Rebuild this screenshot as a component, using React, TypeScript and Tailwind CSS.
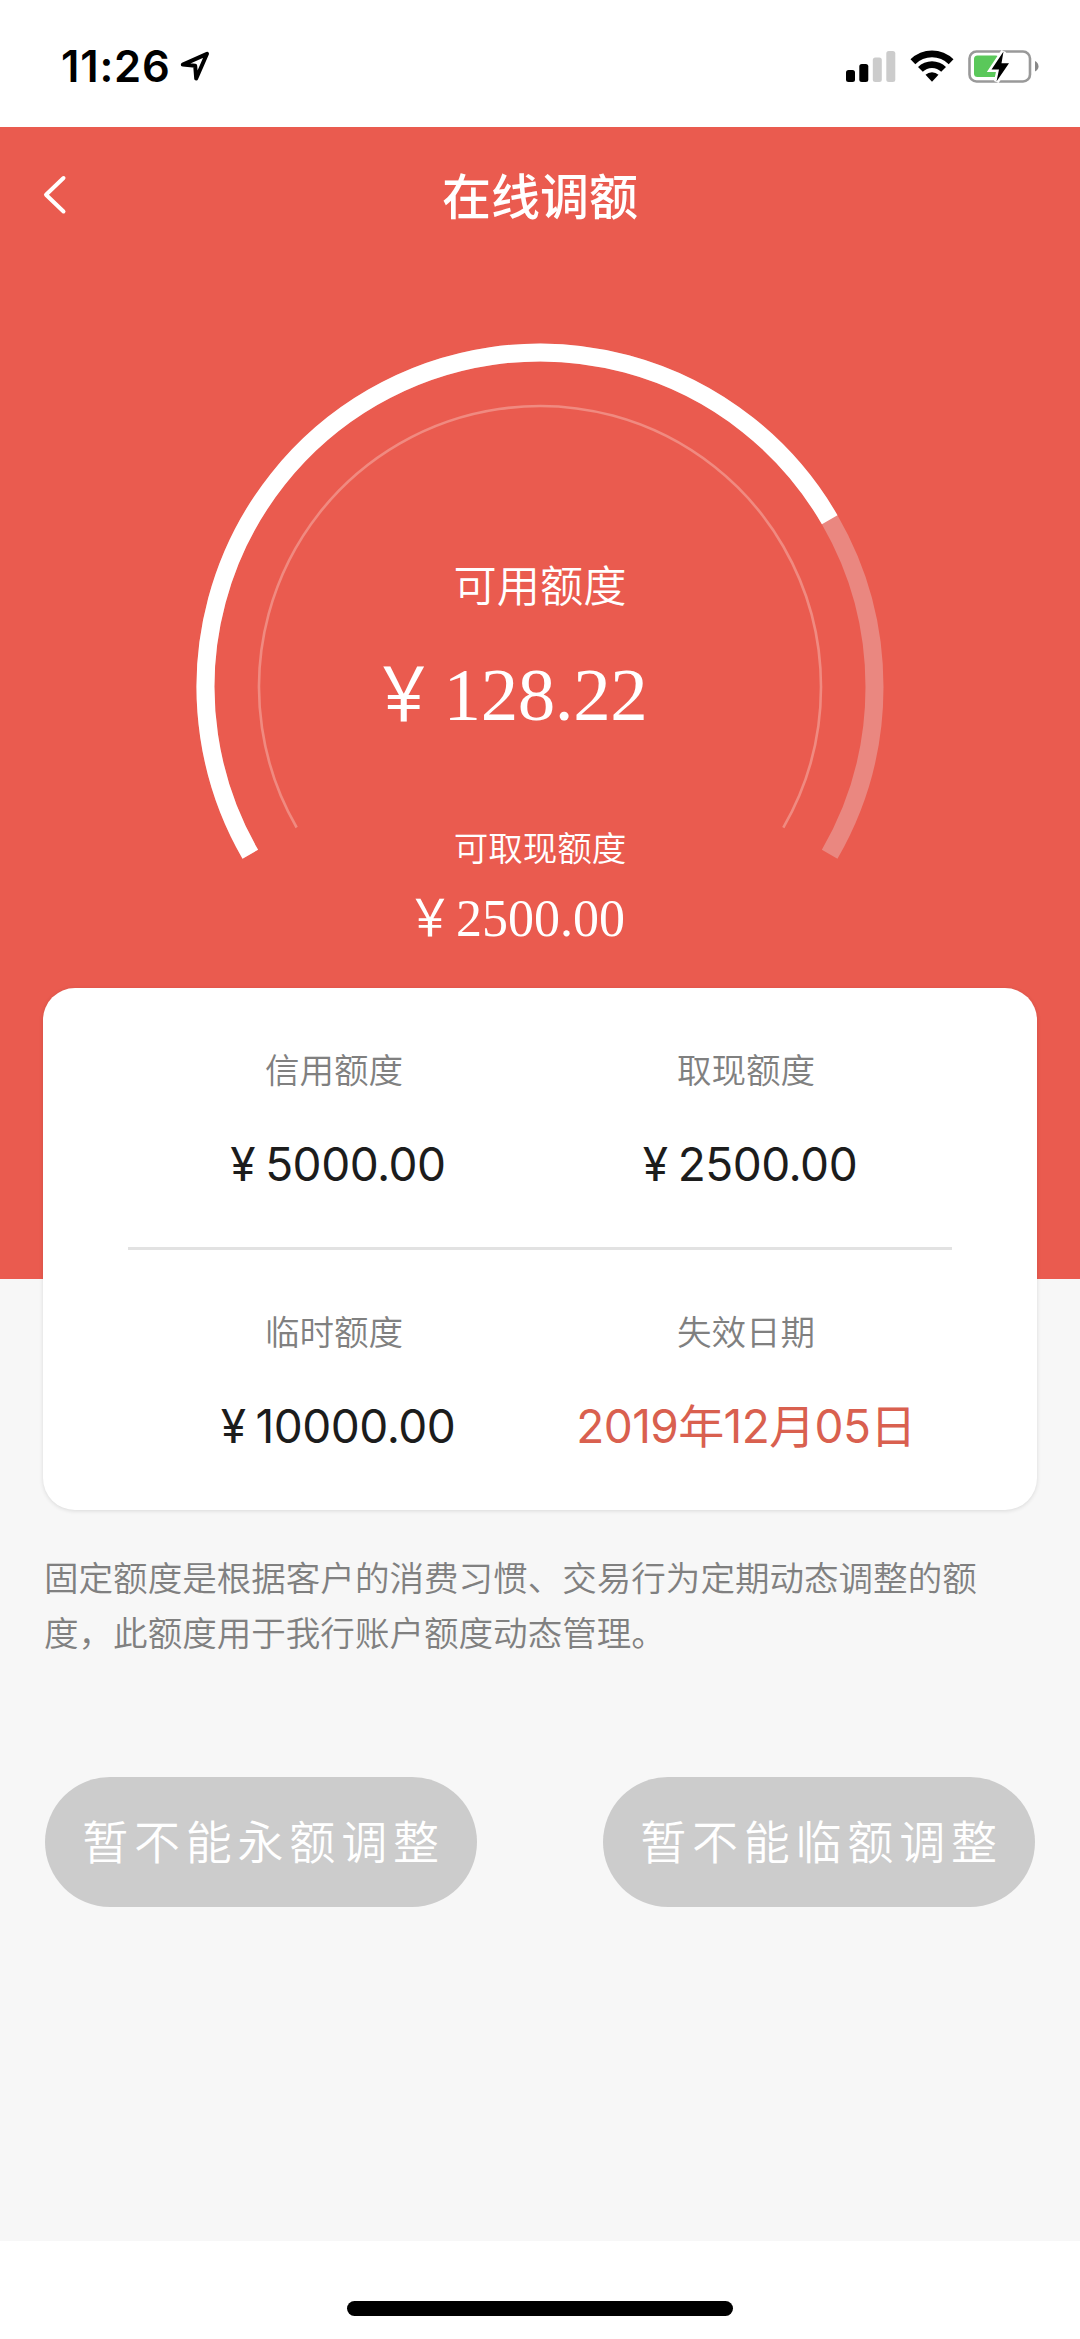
type Quota = {
  label: string;
  prefix?: string;
  value: string;
  highlight?: boolean;
};

const quotaRows: Quota[][] = [
  [
    { label: '信用额度', prefix: '¥', value: '5000.00' },
    { label: '取现额度', prefix: '¥', value: '2500.00' },
  ],
  [
    { label: '临时额度', prefix: '¥', value: '10000.00' },
    { label: '失效日期', value: '2019年12月05日', highlight: true },
  ],
];

const StatusBar = () => (
  <div className="flex h-[127px] shrink-0 items-start justify-between bg-white pl-[61px] pr-[41px] pt-[46px]">
    <div className="flex items-start gap-[9px]">
      <span className="h-10 text-[43.5px] font-semibold leading-10 tracking-[0.8px] text-black">11:26</span>
      <svg className="mt-[5px]" width="30" height="31" viewBox="0 0 30 31" fill="none">
        <path
          d="M2.8 13.6 L27 2.8 L16.2 27.5 L15.2 14.8 Z"
          stroke="#000"
          strokeWidth="4"
          strokeLinejoin="round"
        />
      </svg>
    </div>
    <div className="flex items-start gap-[14px] pt-1">
      <svg className="mt-px" width="50" height="31" viewBox="0 0 50 31">
        <rect x="0" y="19" width="9" height="12" rx="2.5" fill="#000" />
        <rect x="13.3" y="13" width="9" height="18" rx="2.5" fill="#000" />
        <rect x="26.8" y="6.5" width="9" height="24.5" rx="2.5" fill="#ccc" />
        <rect x="40.3" y="0" width="9" height="31" rx="2.5" fill="#ccc" />
      </svg>
      <svg width="44" height="32" viewBox="0 0 44 32">
        <path d="M0.5 9.3 A30.5 30.5 0 0 1 43.5 9.3 L38.7 14.2 A23.6 23.6 0 0 0 5.3 14.2 Z" fill="#000" />
        <path d="M8 17 A19.8 19.8 0 0 1 36 17 L31.2 21.8 A13 13 0 0 0 12.8 21.8 Z" fill="#000" />
        <path d="M15.5 24.8 A9.4 9.4 0 0 1 28.5 24.8 L22 31.8 Z" fill="#000" />
      </svg>
      <svg width="71" height="34" viewBox="0 0 71 34">
        <rect x="1.5" y="1.5" width="60.5" height="30" rx="7" fill="none" stroke="#999" strokeWidth="2.6" />
        <path d="M67 11 Q70.5 13 70.5 16.3 Q70.5 19.8 67 21.6 Z" fill="#888" />
        <rect x="6" y="5.5" width="25" height="21.5" rx="3.5" fill="#5ac85a" />
        <path
          d="M35.5 1.5 L23.5 19.5 H31 L28.5 31.5 L41 13.2 H33.5 Z"
          fill="#000"
          stroke="#fff"
          strokeWidth="5"
          paintOrder="stroke"
        />
      </svg>
    </div>
  </div>
);

const NavBar = () => (
  <header className="relative flex h-[138px] items-center justify-center pt-1">
    <svg className="absolute left-[42px] top-[47px]" width="26" height="42" viewBox="0 0 26 42" fill="none">
      <path d="M21.5 4 L4 20.7 L21.5 37.5" stroke="#fff" strokeWidth="4" strokeLinecap="round" strokeLinejoin="round" />
    </svg>
    <h1 className="text-[49px] font-medium leading-[70px] text-white">在线调额</h1>
  </header>
);

// Both rings open at the bottom: 240deg sweep starting at 150deg, 180deg of it filled
const QuotaGauge = () => (
  <div className="relative flex flex-col items-center text-white">
    <svg className="absolute left-1/2 top-[78px] -translate-x-1/2" width="688" height="688" viewBox="0 0 688 688" fill="none">
      <g transform="rotate(150 344 344)">
        <circle cx="344" cy="344" r="334.5" pathLength="360" strokeDasharray="240 120" stroke="#ea8780" strokeWidth="18" />
        <circle cx="344" cy="344" r="334.5" pathLength="360" strokeDasharray="180 180" stroke="#fff" strokeWidth="18" />
        <circle cx="344" cy="344" r="281" pathLength="360" strokeDasharray="240 120" stroke="#f08a80" strokeWidth="2.6" />
      </g>
    </svg>
    <p className="relative mt-[291px] text-[43.2px] font-[350] leading-[60px]">可用额度</p>
    <p className="relative mt-[34px] flex pr-[65px] font-['Liberation_Serif','Noto_Sans_CJK_SC',serif] text-[75px] leading-[90px] tracking-[-0.4px]">
      <span className="w-[76px] scale-y-[1.16] pr-1 text-center text-[65px]">￥</span>
      <span>128.22</span>
    </p>
    <p className="relative mt-[84px] text-[34.56px] font-[350] leading-[50px]">可取现额度</p>
    <p className="relative mt-[15px] flex pr-[51px] font-['Liberation_Serif','Noto_Sans_CJK_SC',serif] text-[52px] leading-[60px]">
      <span className="w-[52px] scale-y-[1.12] text-center text-[46px]">￥</span>
      <span>2500.00</span>
    </p>
  </div>
);

const QuotaCell = ({ label, prefix, value, highlight }: Quota) => (
  <div className="flex flex-1 flex-col items-center">
    <p className="text-[34.56px] font-[350] leading-[50px] text-[#808080]">{label}</p>
    <p
      className={`mt-[38px] flex whitespace-nowrap text-[46px] leading-[60px] ${
        highlight ? 'tracking-[-0.6px] text-[#d9604f]' : 'pl-2 tracking-[-0.5px] text-[#1c1c1c]'
      }`}
    >
      {prefix && <span className="mr-[10px]">{prefix}</span>}
      <span>{value}</span>
    </p>
  </div>
);

const App = () => {
  return (
    <div className="flex h-[2339px] w-[1080px] flex-col overflow-hidden bg-[#f7f7f7] font-['Inter','Noto_Sans_CJK_SC',sans-serif]">
      <StatusBar />

      <section className="h-[1152px] shrink-0 bg-[#ea5b4f]">
        <NavBar />
        <QuotaGauge />
      </section>

      {/* Quota card */}
      <section className="relative -mt-[291px] mx-[43px] h-[522px] shrink-0 rounded-[32px] bg-white px-[85px] shadow-[0_1px_4px_rgba(0,0,0,0.12)]">
        {quotaRows.map((row, index) => (
          <div
            key={index}
            className={`flex pt-[58px] ${index === 0 ? 'h-[262px] border-b-[3px] border-[#e2e2e2]' : 'h-[259px]'}`}
          >
            {row.map((quota) => (
              <QuotaCell key={quota.label} {...quota} />
            ))}
          </div>
        ))}
      </section>

      <p className="mt-[41px] px-[44px] text-[34.56px] font-[350] leading-[55px] text-[#808080]">
        固定额度是根据客户的消费习惯、交易行为定期动态调整的额度，此额度用于我行账户额度动态管理。
      </p>

      {/* Actions */}
      <div className="mt-[116px] flex justify-between px-[45px]">
        <button className="h-[130px] w-[432px] rounded-full bg-[#ccc] pl-[5px] text-[46px] font-[350] tracking-[5.76px] text-white" disabled>
          暂不能永额调整
        </button>
        <button className="h-[130px] w-[432px] rounded-full bg-[#ccc] pl-[5px] text-[46px] font-[350] tracking-[5.76px] text-white" disabled>
          暂不能临额调整
        </button>
      </div>

      <div className="mt-auto flex h-[98px] shrink-0 justify-center bg-white pt-[60px]">
        <div className="h-[15px] w-[386px] rounded-full bg-black" />
      </div>
    </div>
  );
};

export default App;
